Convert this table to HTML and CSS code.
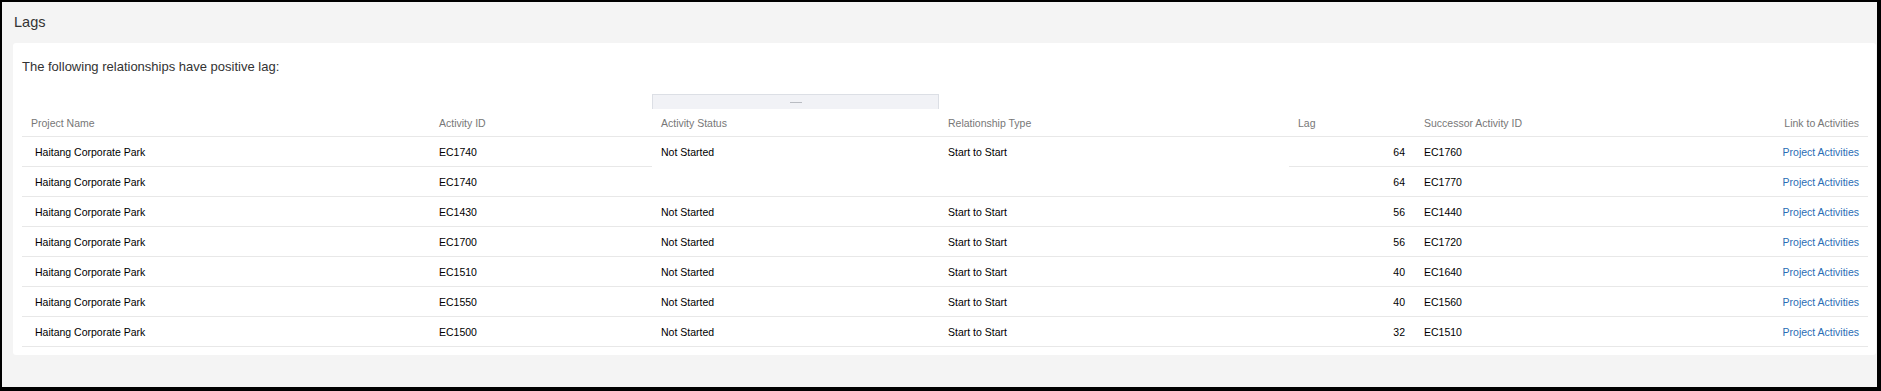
FILE: index.html
```html
<!DOCTYPE html>
<html lang="en">
<head>
    <title>Lags</title>
    <link rel="stylesheet" href="styles.css">
</head>
<body>
    <div class="frame">
        <div class="title-bar">Lags</div>
        <div class="panel">
            <p class="intro">The following relationships have positive lag:</p>
            <table class="lag-table">
                <colgroup>
                    <col style="width: 408px">
                    <col style="width: 222px">
                    <col style="width: 287px">
                    <col style="width: 350px">
                    <col style="width: 126px">
                    <col style="width: 250px">
                    <col>
                </colgroup>
                <thead>
                    <tr class="band">
                        <td colspan="2"></td>
                        <td><div class="grip"><span></span></div></td>
                        <td colspan="4"></td>
                    </tr>
                    <tr class="head">
                        <th>Project Name</th>
                        <th>Activity ID</th>
                        <th>Activity Status</th>
                        <th>Relationship Type</th>
                        <th>Lag</th>
                        <th>Successor Activity ID</th>
                        <th class="right">Link to Activities</th>
                    </tr>
                </thead>
                <tbody>
                    <tr>
                        <td class="name">Haitang Corporate Park</td>
                        <td>EC1740</td>
                        <td rowspan="2" class="merged">Not Started</td>
                        <td rowspan="2" class="merged">Start to Start</td>
                        <td class="num">64</td>
                        <td>EC1760</td>
                        <td class="right"><a href="#">Project Activities</a></td>
                    </tr>
                    <tr>
                        <td class="name">Haitang Corporate Park</td>
                        <td>EC1740</td>
                        <td class="num">64</td>
                        <td>EC1770</td>
                        <td class="right"><a href="#">Project Activities</a></td>
                    </tr>
                    <tr>
                        <td class="name">Haitang Corporate Park</td>
                        <td>EC1430</td>
                        <td>Not Started</td>
                        <td>Start to Start</td>
                        <td class="num">56</td>
                        <td>EC1440</td>
                        <td class="right"><a href="#">Project Activities</a></td>
                    </tr>
                    <tr>
                        <td class="name">Haitang Corporate Park</td>
                        <td>EC1700</td>
                        <td>Not Started</td>
                        <td>Start to Start</td>
                        <td class="num">56</td>
                        <td>EC1720</td>
                        <td class="right"><a href="#">Project Activities</a></td>
                    </tr>
                    <tr>
                        <td class="name">Haitang Corporate Park</td>
                        <td>EC1510</td>
                        <td>Not Started</td>
                        <td>Start to Start</td>
                        <td class="num">40</td>
                        <td>EC1640</td>
                        <td class="right"><a href="#">Project Activities</a></td>
                    </tr>
                    <tr>
                        <td class="name">Haitang Corporate Park</td>
                        <td>EC1550</td>
                        <td>Not Started</td>
                        <td>Start to Start</td>
                        <td class="num">40</td>
                        <td>EC1560</td>
                        <td class="right"><a href="#">Project Activities</a></td>
                    </tr>
                    <tr>
                        <td class="name">Haitang Corporate Park</td>
                        <td>EC1500</td>
                        <td>Not Started</td>
                        <td>Start to Start</td>
                        <td class="num">32</td>
                        <td>EC1510</td>
                        <td class="right"><a href="#">Project Activities</a></td>
                    </tr>
                </tbody>
            </table>
        </div>
    </div>
</body>
</html>
```

FILE: styles.css
```css
body{
    margin: 0;
    font-family: "Liberation Sans", Arial, sans-serif;
}
.frame{
    box-sizing: border-box;
    height: 391px;
    border-style: solid;
    border-color: #000;
    border-width: 2px 4px 4px 2px;
    background-color: #f4f4f4;
}
.title-bar{
    height: 41px;
    line-height: 41px;
    padding: 0 12px;
    font-size: 14.5px;
    color: #333;
}
.panel{
    box-sizing: border-box;
    height: 312px;
    margin: 0 1px 0 11px;
    padding: 16px 8px 0 9px;
    background-color: #fff;
    border-radius: 3px;
}
.intro{
    margin: 0;
    line-height: 16px;
    font-size: 13px;
    color: #333;
}
.lag-table{
    width: 100%;
    margin-top: 19px;
    border-collapse: collapse;
    table-layout: fixed;
    font-size: 10.5px;
}
.band td{
    height: 15px;
    padding: 0;
}
.grip{
    box-sizing: border-box;
    height: 15px;
    width: 287px;
    border: 1px solid #dcdfe5;
    border-bottom: none;
    background-color: #f1f2f6;
    display: flex;
    align-items: center;
    justify-content: center;
}
.grip span{
    display: block;
    width: 12px;
    height: 1px;
    background-color: #b9bcc2;
}
.head th{
    height: 27px;
    padding: 0 9px;
    text-align: left;
    font-weight: normal;
    color: #777;
    border-bottom: 1px solid #e8e8e8;
}
tbody td{
    height: 29px;
    padding: 0 9px;
    color: #000;
    border-bottom: 1px solid #e8e8e8;
    white-space: nowrap;
}
tbody td.name{
    padding-left: 13px;
}
tbody td.merged{
    vertical-align: top;
    padding-top: 9px;
}
td.num{
    text-align: right;
    padding-right: 10px;
}
.right{
    text-align: right;
}
th.right{
    text-align: right;
}
a{
    color: #2a6db5;
    text-decoration: none;
}
```
